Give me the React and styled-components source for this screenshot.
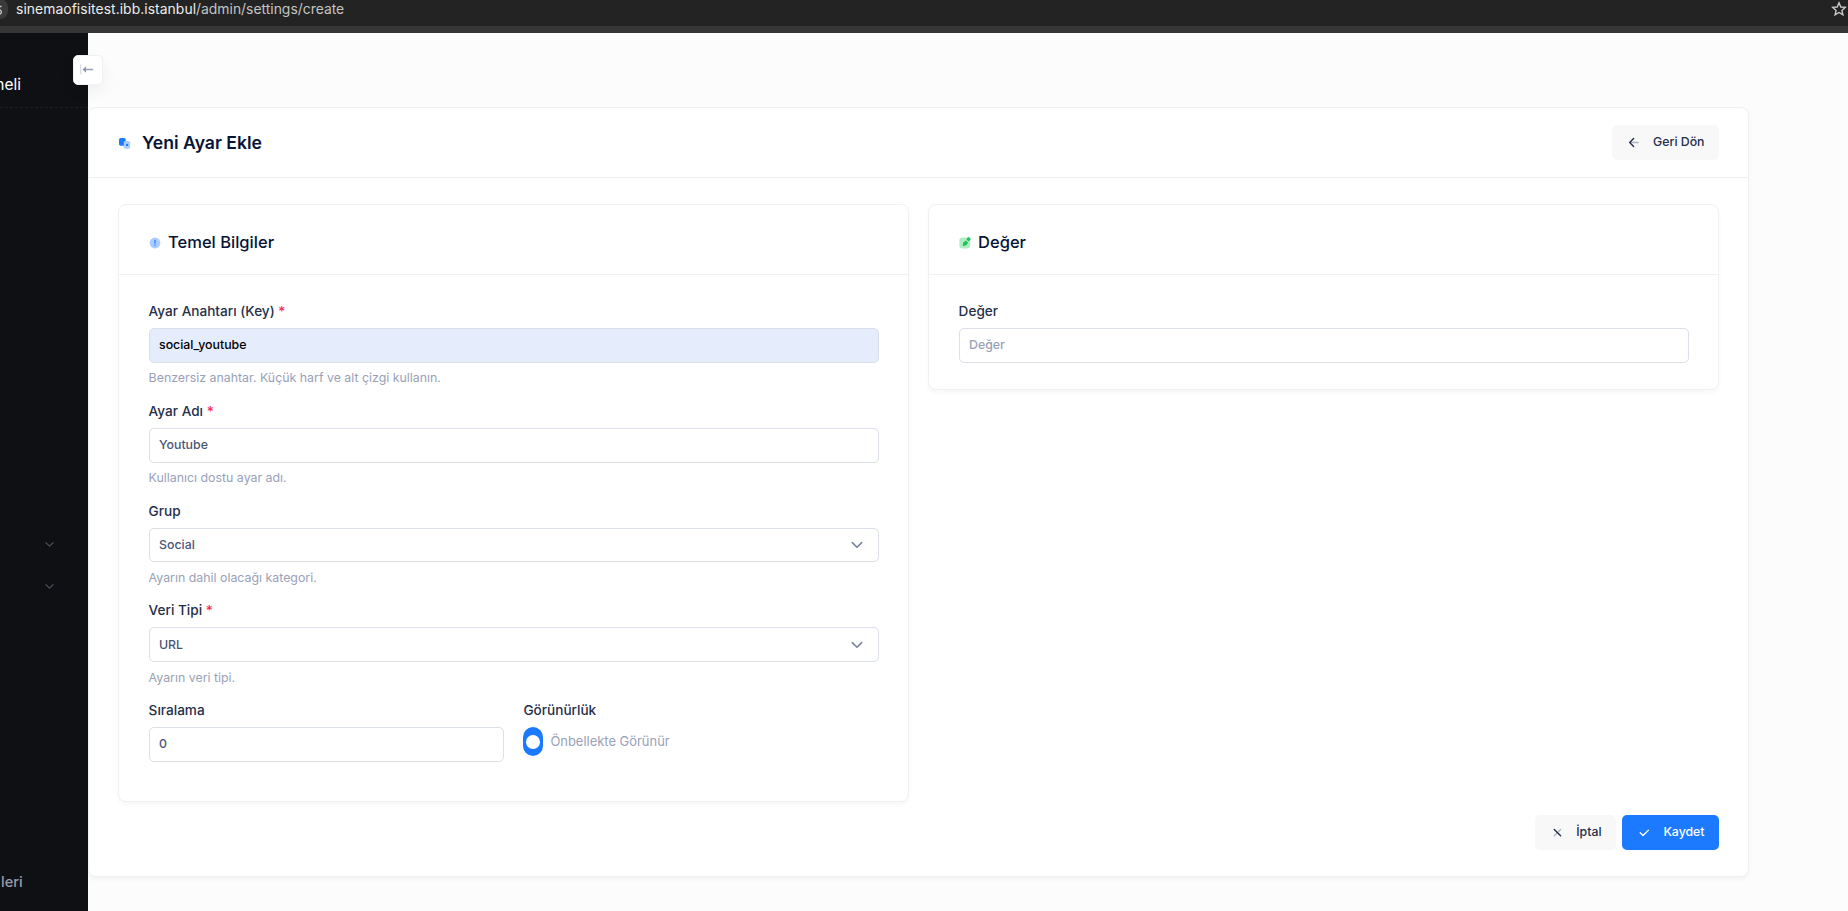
import React, {useState} from 'react';
import styled, {createGlobalStyle} from 'styled-components';

const GlobalStyle = createGlobalStyle`
  * {
    box-sizing: border-box;
  }

  body {
    margin: 0;
    background: #fcfcfc;
    font-family: Inter, "Liberation Sans", sans-serif;
    color: #252f4a;
    overflow: hidden;
  }

  button, input, select {
    font-family: inherit;
  }
`;

const Page = styled.div`
  display: flex;
  flex-direction: column;
  height: 911px;
  overflow: hidden;
`;

const BrowserBar = styled.div`
  display: flex;
  align-items: flex-start;
  flex: none;
  height: 33px;
  background: #232323;
  border-bottom: 7px solid #363636;
`;

const SiteInfo = styled.div`
  width: 8px;
  height: 20px;
  margin-top: -1px;
  border-radius: 0 10px 10px 0;
  background: #3a3a3a;

  svg {
    display: block;
  }
`;

const Url = styled.div`
  flex: 1;
  padding-left: 8px;
  font-size: 13.9px;
  line-height: 18px;
  color: #c4c4c4;

  span {
    letter-spacing: 0.05px;
    color: #ececec;
  }
`;

const StarIcon = styled.svg`
  margin: 1px 1px 0 0;
`;

const Main = styled.div`
  display: flex;
  flex: 1;
`;

const Sidebar = styled.div`
  position: relative;
  display: flex;
  flex-direction: column;
  flex: none;
  width: 88px;
  background: #0f1014;
`;

const Logo = styled.div`
  height: 75px;
  padding-top: 41px;
  border-bottom: 1px dashed #1d1e24;
  font-size: 15.5px;
  line-height: 21px;
  font-weight: 400;
  color: #fff;
  overflow: hidden;

  span {
    display: block;
    width: 21px;
    direction: rtl;
    white-space: nowrap;
  }
`;

const Toggle = styled.button`
  position: absolute;
  top: 22px;
  right: -15px;
  width: 30px;
  height: 30px;
  padding: 0;
  display: flex;
  align-items: center;
  justify-content: center;
  border: 1px solid #f1f1f4;
  border-radius: 5px;
  background: #fff;
  box-shadow: 0 7px 16px rgba(0, 0, 0, 0.06);
`;

const Menu = styled.div`
  display: flex;
  flex-direction: column;
  gap: 33px;
  margin-top: 432px;
  padding-left: 45px;

  svg {
    display: block;
  }
`;

const MenuText = styled.div`
  margin-top: 281px;
  padding-left: 1px;
  font-size: 14.6px;
  line-height: 20px;
  font-weight: 500;
  color: #9a9cae;
`;

const Content = styled.div`
  flex: 1;
  padding-top: 74px;
`;

const Card = styled.div`
  border: 1px solid #f0f0f2;
  border-radius: 8px;
  background: #fff;
  box-shadow: 0 3px 4px rgba(0, 0, 0, 0.03);
`;

const PageCard = styled(Card)`
  width: 1661px;
  height: 770px;
`;

const PageHeader = styled.div`
  display: flex;
  align-items: center;
  justify-content: space-between;
  height: 70px;
  padding: 0 29px;
  border-bottom: 1px solid #f0f0f2;
`;

const PageTitle = styled.h1`
  display: flex;
  align-items: center;
  gap: 11px;
  margin: 0;
  font-size: 17.6px;
  font-weight: 600;
  color: #071437;
`;

const PageBody = styled.div`
  padding: 26px 29px 0;
`;

const Columns = styled.div`
  display: grid;
  grid-template-columns: 1fr 1fr;
  gap: 19px;
  align-items: start;
`;

const SectionCard = styled(Card)`
  height: ${props => props.$height}px;
`;

const SectionTitle = styled.h2`
  display: flex;
  align-items: center;
  gap: 6px;
  height: 70px;
  margin: 0;
  padding: 5px 29px 0 30px;
  border-bottom: 1px solid #f0f0f2;
  font-size: 16.55px;
  font-weight: 500;
  color: #071437;
`;

const Fields = styled.div`
  padding: 26px 29px 0 29.6px;
`;

const Field = styled.div`
  height: 99.75px;
`;

const Label = styled.label`
  display: block;
  height: 20px;
  margin-bottom: 7px;
  font-size: 13.6px;
  line-height: 20px;
  font-weight: 500;
  color: #252f4a;

  span {
    color: #f8285a;
  }
`;

const inputStyle = `
  display: block;
  width: 100%;
  height: 34.9px;
  padding: 0 10px 2px 9.4px;
  border: 1px solid #dbdfe9;
  border-radius: 5px;
  font-size: 12.35px;
  font-weight: 500;
  outline: none;
`;

const Input = styled.input`
  ${inputStyle}
  background: ${props => props.$filled ? '#e5edfd' : '#fff'};
  color: ${props => props.$filled ? '#000' : '#4b5675'};

  &::placeholder {
    color: #99a1b7;
    font-weight: 500;
  }
`;

const SelectBox = styled.div`
  ${inputStyle}
  display: flex;
  align-items: center;
  justify-content: space-between;
  padding-right: 15px;
  padding-bottom: 0;
  background: #fff;
  color: #4b5675;
`;

const Help = styled.div`
  margin-top: 6.4px;
  font-size: 12.36px;
  line-height: 18px;
  color: #99a1b7;
`;

const HalfRow = styled.div`
  display: grid;
  grid-template-columns: 355px 1fr;
  gap: 19.8px;
`;

const SwitchRow = styled.div`
  display: flex;
  align-items: center;
  gap: 7.4px;
  font-size: 12.95px;
  color: #99a1b7;
`;

const SwitchText = styled.span`
  padding-bottom: 1px;
`;

const Switch = styled.button`
  display: flex;
  align-items: center;
  justify-content: center;
  width: 20px;
  height: 29px;
  margin-left: -0.4px;
  padding: 0;
  border: none;
  border-radius: 10px;
  background: ${props => props.$on ? '#1b7aff' : '#dbdfe9'};

  span {
    width: 14px;
    height: 14px;
    border-radius: 50%;
    background: #fff;
  }
`;

const Actions = styled.div`
  display: flex;
  justify-content: flex-end;
  gap: 6px;
  margin-top: 13px;
`;

const Button = styled.button`
  display: flex;
  align-items: center;
  justify-content: space-between;
  width: ${props => props.$width}px;
  height: 35px;
  padding: 0 14.5px 0 16px;
  border: none;
  border-radius: 5px;
  background: ${props => props.$primary ? '#1b7aff' : '#f8f8f8'};
  color: ${props => props.$primary ? '#fff' : '#252f4a'};
  font-size: 12.3px;
  font-weight: 500;

  svg {
    margin-bottom: 1px;
  }

  span {
    padding-bottom: 2px;
  }
`;

const Chevron = ({size = 12, color = '#78829d'}) => (
  <svg width={size} height={size} viewBox="0 0 12 12" fill="none">
    <path d="M1.3 3.6 L6 8.2 L10.7 3.6" stroke={color} strokeWidth="1.6" strokeLinecap="round" strokeLinejoin="round" />
  </svg>
)

const SelectField = ({label, required, value, help}) => (
  <Field>
    <Label>{label} {required && <span>*</span>}</Label>
    <SelectBox>{value}<Chevron /></SelectBox>
    <Help>{help}</Help>
  </Field>
)

const App = () => {
  const [form, setForm] = useState({key: 'social_youtube', name: 'Youtube', order: '0', value: ''})
  const [visible, setVisible] = useState(true)

  const handleChange = e => {
    const {name, value} = e.target;
    setForm({...form, [name]: value})
  }

  return (
    <Page>
      <GlobalStyle />
      <BrowserBar>
        <SiteInfo>
          <svg width="8" height="20" viewBox="0 0 8 20" fill="none" stroke="#cfcfcf" strokeWidth="1.3">
            <path d="M-1 7.5H1.5" />
            <circle cx="-1" cy="13" r="2.3" />
          </svg>
        </SiteInfo>
        <Url><span>sinemaofisitest.ibb.istanbul</span>/admin/settings/create</Url>
        <StarIcon width="16" height="16" viewBox="0 0 16 16" fill="none" stroke="#c9c9c9" strokeWidth="1.4">
          <path d="M8 1.8 L9.8 6 L14.3 6.4 L10.9 9.4 L11.9 13.9 L8 11.5 L4.1 13.9 L5.1 9.4 L1.7 6.4 L6.2 6 Z" />
        </StarIcon>
      </BrowserBar>

      <Main>
        <Sidebar>
          <Logo><span>neli</span></Logo>
          <Toggle type="button">
            <svg width="16" height="12" viewBox="0 0 16 12" fill="none">
              <path d="M0.7 0.5V10.5" stroke="#d5d9e4" strokeWidth="1.2" />
              <path d="M5 5.5H12.6" stroke="#99a1b7" strokeWidth="1.4" strokeLinecap="round" />
              <path d="M6 2.3 V8.7 L2.6 5.5 Z" fill="#8d96b0" />
            </svg>
          </Toggle>
          <Menu>
            <Chevron size={9} color="#4b4c55" />
            <Chevron size={9} color="#4b4c55" />
          </Menu>
          <MenuText>leri</MenuText>
        </Sidebar>

        <Content>
          <PageCard>
            <PageHeader>
              <PageTitle>
                <svg width="13" height="13" viewBox="0 0 13 13">
                  <rect x="1" y="2" width="6.7" height="7.7" rx="1.6" fill="#1b7aff" />
                  <rect x="5.7" y="5" width="6.4" height="7.7" rx="1.6" fill="#a9cdff" />
                  <circle cx="9.1" cy="8.9" r="1.2" fill="#1b7aff" />
                </svg>
                Yeni Ayar Ekle
              </PageTitle>
              <Button type="button" $width={107}>
                <svg width="12" height="12" viewBox="0 0 12 12" fill="none" strokeWidth="1.4" strokeLinecap="round" strokeLinejoin="round">
                  <path d="M2.5 6.5H10.2" stroke="#b0b4c2" />
                  <path d="M5.6 2.6L1.7 6.5L5.6 10.4" stroke="#252f4a" />
                </svg>
                <span>Geri Dön</span>
              </Button>
            </PageHeader>

            <PageBody>
              <Columns>
                <SectionCard $height={598}>
                  <SectionTitle>
                    <svg width="13" height="13" viewBox="0 0 13 13">
                      <circle cx="6" cy="7" r="5.4" fill="#a9cdff" />
                      <path d="M6 4.6V7.3" stroke="#3d8dff" strokeWidth="1.5" strokeLinecap="round" />
                      <circle cx="6" cy="9.4" r="0.8" fill="#3d8dff" />
                    </svg>
                    Temel Bilgiler
                  </SectionTitle>
                  <Fields>
                    <Field>
                      <Label>Ayar Anahtarı (Key) <span>*</span></Label>
                      <Input $filled type="text" name="key" value={form.key} onChange={handleChange} />
                      <Help>Benzersiz anahtar. Küçük harf ve alt çizgi kullanın.</Help>
                    </Field>
                    <Field>
                      <Label>Ayar Adı <span>*</span></Label>
                      <Input type="text" name="name" value={form.name} onChange={handleChange} />
                      <Help>Kullanıcı dostu ayar adı.</Help>
                    </Field>
                    <SelectField label="Grup" value="Social" help="Ayarın dahil olacağı kategori." />
                    <SelectField label="Veri Tipi" required value="URL" help="Ayarın veri tipi." />
                    <HalfRow>
                      <div>
                        <Label>Sıralama</Label>
                        <Input type="text" name="order" value={form.order} onChange={handleChange} />
                      </div>
                      <div>
                        <Label>Görünürlük</Label>
                        <SwitchRow>
                          <Switch type="button" $on={visible} onClick={() => setVisible(!visible)}><span /></Switch>
                          <SwitchText>Önbellekte Görünür</SwitchText>
                        </SwitchRow>
                      </div>
                    </HalfRow>
                  </Fields>
                </SectionCard>

                <SectionCard $height={186}>
                  <SectionTitle>
                    <svg width="13" height="13" viewBox="0 0 13 13">
                      <rect x="0.4" y="1.6" width="10.8" height="11" rx="3" fill="#b0ecc5" />
                      <path d="M3.8 10 L4.1 6.8 L6.9 4.4 L9.2 6.7 L6.8 9.6 Z" fill="#17c653" />
                      <rect x="7.9" y="1.4" width="3.4" height="3.4" rx="1" transform="rotate(45 9.6 3.1)" fill="#17c653" />
                    </svg>
                    Değer
                  </SectionTitle>
                  <Fields>
                    <Label>Değer</Label>
                    <Input type="text" name="value" placeholder="Değer" value={form.value} onChange={handleChange} />
                  </Fields>
                </SectionCard>
              </Columns>

              <Actions>
                <Button type="button" $width={81}>
                  <svg width="12" height="12" viewBox="0 0 12 12" fill="none" strokeWidth="1.4" strokeLinecap="round">
                    <path d="M9.6 3.4L3.3 9.7" stroke="#b0b4c2" />
                    <path d="M3.3 3.4L9.6 9.7" stroke="#252f4a" />
                  </svg>
                  <span>İptal</span>
                </Button>
                <Button type="submit" $primary $width={97}>
                  <svg width="12" height="12" viewBox="0 0 12 12" fill="none">
                    <path d="M2.2 6.8L5 9.5L10.4 4.3" stroke="#fff" strokeWidth="1.3" strokeLinecap="round" strokeLinejoin="round" />
                  </svg>
                  <span>Kaydet</span>
                </Button>
              </Actions>
            </PageBody>
          </PageCard>
        </Content>
      </Main>
    </Page>
  )
}

export default App;
